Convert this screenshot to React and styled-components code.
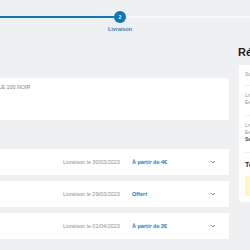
import React from "react";
import styled, { createGlobalStyle } from "styled-components";

const Global = createGlobalStyle`
  html, body { margin: 0; padding: 0; overflow: hidden; background: #eef0f2; }
  body { font-family: "Liberation Sans", Arial, sans-serif; color: #23272b; }
  * { box-sizing: border-box; }
`;

const Page = styled.div`
  width: 250px;
  height: 250px;
  overflow: hidden;
  background: #eef0f2;
`;

const Stepper = styled.div`
  display: flex;
  align-items: flex-start;
  padding-top: 11px;
  height: 45px;
`;

const Track = styled.div`
  height: 2px;
  margin-top: 5px;
  background: ${(p) => (p.$done ? "#0b78bf" : "#f8f9fa")};
  flex: ${(p) => (p.$done ? "0 0 114px" : "1 1 auto")};
`;

const Step = styled.div`
  display: flex;
  flex-direction: column;
  align-items: center;
  width: 12px;
`;

const Circle = styled.div`
  width: 12px;
  height: 12px;
  border-radius: 50%;
  background: #0b78bf;
  color: #fff;
  font-size: 5px;
  font-weight: 700;
  display: flex;
  align-items: center;
  justify-content: center;
`;

const StepLabel = styled.div`
  margin-top: 3px;
  font-size: 5.4px;
  line-height: 7px;
  font-weight: 700;
  color: #1f7fc1;
  white-space: nowrap;
`;

const Body = styled.div`
  display: flex;
  gap: 10px;
  margin-left: -171px;
`;

const Main = styled.div`
  flex: 0 0 400px;
  display: flex;
  flex-direction: column;
`;

const Aside = styled.div`
  flex: 0 0 220px;
  display: flex;
  flex-direction: column;
`;

const Heading = styled.h2`
  margin: 0;
  font-size: 11px;
  line-height: 14px;
  font-weight: 700;
  color: #1d2125;
  white-space: nowrap;
  margin-left: ${(p) => (p.$shift ? "-1px" : "0")};
`;

const SubHeading = styled.h3`
  margin: 8px 0;
  font-size: 9px;
  line-height: 13px;
  font-weight: 700;
  color: #1d2125;
  white-space: nowrap;
`;

const Card = styled.div`
  background: #fff;
  border-radius: 2px;
  margin-top: ${(p) => p.$top || "0"};
`;

const ProductCard = styled(Card)`
  height: 42px;
  padding: 6px 8px;
  display: flex;
  gap: 8px;
`;

const Thumb = styled.div`
  width: 30px;
  height: 30px;
  background: #f3f4f5;
  border-radius: 2px;
`;

const ProductName = styled.div`
  font-size: 5.4px;
  line-height: 7px;
  color: #7c8288;
  text-transform: uppercase;
  white-space: nowrap;
  padding-left: ${(p) => p.$indent || "0"};
`;

const Rows = styled.div`
  display: flex;
  flex-direction: column;
  gap: 6px;
`;

const Row = styled.div`
  height: 26px;
  background: #fff;
  border-radius: 2px;
  display: grid;
  grid-template-columns: 1fr 69px 77px 8px;
  align-items: center;
  padding: 0 12px 0 10px;
  font-size: 5.5px;
  line-height: 7px;
  white-space: nowrap;
`;

const Method = styled.span`
  color: #2a2e33;
  font-weight: 700;
`;

const DateText = styled.span`
  color: #8a8f95;
`;

const Price = styled.span`
  color: #1a7cc2;
  font-weight: 700;
`;

const Chevron = () => (
  <svg width="8" height="8" viewBox="0 0 8 8" fill="none">
    <path d="M2.2 3.2 L4 4.9 L5.8 3.2" stroke="#3a89c6" strokeWidth="0.9" strokeLinecap="round" strokeLinejoin="round" />
  </svg>
);

const SummaryCard = styled(Card)`
  padding: 6px 6px 6px 6px;
  margin-top: 6px;
`;

const Section = styled.div`
  padding: ${(p) => p.$pad || "0"};
  border-bottom: ${(p) => (p.$line ? "1px solid #eceef0" : "none")};
`;

const Line = styled.div`
  font-size: 5px;
  line-height: 7px;
  color: ${(p) => (p.$strong ? "#4a4f55" : "#8d9298")};
  font-weight: ${(p) => (p.$strong ? 700 : 400)};
  white-space: nowrap;
`;

const Total = styled.div`
  font-size: 7px;
  line-height: 9px;
  font-weight: 700;
  color: #1d2125;
  margin-top: 7px;
  white-space: nowrap;
`;

const Notice = styled.div`
  height: 20px;
  margin-top: 7px;
  background: #fff6c2;
  border-radius: 2px;
`;

const deliveries = [
  { name: "Livraison à domicile", date: "Livraison le 30/03/2023", price: "À partir de 4€" },
  { name: "Retrait en magasin", date: "Livraison le 29/03/2023", price: "Offert" },
  { name: "Point relais", date: "Livraison le 01/04/2023", price: "À partir de 2€" },
];

export default function App() {
  return (
    <Page>
      <Global />
      <Stepper>
        <Track $done />
        <Step>
          <Circle>2</Circle>
          <StepLabel>Livraison</StepLabel>
        </Step>
        <Track />
      </Stepper>
      <Body>
        <Main>
          <Heading>Livraison</Heading>
          <ProductCard $top="19px">
            <Thumb />
            <ProductName $indent="73px">ENCEINTE PORTABLE 100 NOIR</ProductName>
          </ProductCard>
          <SubHeading>Mode de livraison</SubHeading>
          <Rows>
            {deliveries.map((d) => (
              <Row key={d.date}>
                <Method>{d.name}</Method>
                <DateText>{d.date}</DateText>
                <Price>{d.price}</Price>
                <Chevron />
              </Row>
            ))}
          </Rows>
        </Main>
        <Aside>
          <Heading $shift>Récapitulatif</Heading>
          <SummaryCard>
            <Section $line $pad="0 0 7px">
              <Line>Sous-total (1 article)</Line>
            </Section>
            <Section $line $pad="6px 0 9px">
              <Line>Livraison à domicile</Line>
              <Line>Expédié par Vendeur</Line>
            </Section>
            <Section $line $pad="6px 0 9px">
              <Line>Livraison à domicile</Line>
              <Line>Expédié par Vendeur</Line>
              <Line $strong>Service inclus</Line>
            </Section>
            <Total>Total</Total>
            <Notice />
          </SummaryCard>
        </Aside>
      </Body>
    </Page>
  );
}
